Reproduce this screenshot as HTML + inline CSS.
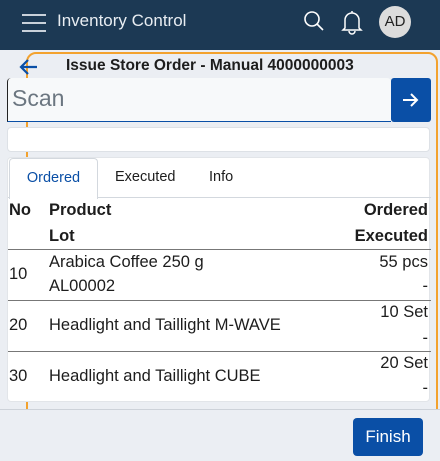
<!DOCTYPE html>
<html><head><style>
*{box-sizing:border-box;margin:0;padding:0}
body{width:440px;height:461px;background:#ebeef3;font-family:"Liberation Sans",sans-serif;position:relative;overflow:hidden;color:#1d1d1d}
.hdr{position:absolute;left:0;top:0;width:440px;height:50px;background:#1c3954;color:#fff}
.abs{position:absolute}
.orange{position:absolute;border:2px solid #f3a22e;border-radius:10px}
.c .abs{font-size:16.5px}
</style></head><body>
<div class="hdr">
 <div class="abs" style="left:22px;top:14px;width:24px;height:2px;background:#c9d1da"></div>
 <div class="abs" style="left:22px;top:22px;width:24px;height:2px;background:#c9d1da"></div>
 <div class="abs" style="left:22px;top:30px;width:24px;height:2px;background:#c9d1da"></div>
 <div class="abs" style="left:57px;top:11px;font-size:17px;color:#e8edf2">Inventory Control</div>
 <svg class="abs" style="left:303px;top:10px" width="22" height="22" viewBox="0 0 22 22"><circle cx="9" cy="9" r="7" fill="none" stroke="#fff" stroke-width="1.6"/><path d="M14 14l6 6" stroke="#fff" stroke-width="1.6"/></svg>
 <svg class="abs" style="left:341px;top:9px" width="22" height="26" viewBox="0 0 22 26"><path d="M4 19V11a7 7 0 0 1 14 0v8l2 2H2z M11 2v2 M8 22a3 3 0 0 0 6 0" fill="none" stroke="#fff" stroke-width="1.5"/></svg>
 <div class="abs" style="left:379px;top:6px;width:32px;height:32px;border-radius:50%;background:#dcdcdc;color:#222;font-size:15px;text-align:center;line-height:32px">AD</div>
</div>
<div class="orange" style="left:26px;top:52px;width:412px;height:400px"></div>
<svg class="abs" style="left:19px;top:58px" width="20" height="18" viewBox="0 0 20 18"><path d="M18 9H3 M9 2L2 9l7 7" fill="none" stroke="#0a4fa6" stroke-width="2.2"/></svg>
<div class="abs" style="left:64px;top:57px;font-size:15.5px;font-weight:bold;background:#ebeef3;padding:0 2px">Issue Store Order - Manual 4000000003</div>
<div class="abs" style="left:7px;top:78px;width:384px;height:44px;background:#f7f9fa;border-bottom:1.5px solid #0a4fa6;border-radius:4px 4px 0 0;font-size:23px;color:#6b7680;padding:7px 0 0 4px;border-left:1px solid #222">Scan</div>
<div class="abs" style="left:391px;top:78px;width:40px;height:44px;background:#0a4fa6;border-radius:3px"><svg style="position:absolute;left:11px;top:14px" width="18" height="16" viewBox="0 0 18 16"><path d="M1 8h14 M9 2l6 6-6 6" fill="none" stroke="#fff" stroke-width="2"/></svg></div>
<div class="abs" style="left:7px;top:127px;width:423px;height:25px;background:#fff;border:1px solid #dde1e6;border-radius:4px"></div>
<div class="abs c" style="left:7px;top:157px;width:423px;height:245px;background:#fff;border-radius:4px;border:1px solid #e2e5e9">
 <div class="abs" style="left:0;top:0;width:423px;height:40px;border-bottom:1px solid #d3d8de"></div>
 <div class="abs" style="left:1px;top:0;width:89px;height:41px;background:#fff;border:1px solid #d3d8de;border-bottom:none;border-radius:4px 4px 0 0;color:#0a4fa6;font-size:14.5px!important;text-align:center;line-height:39px">Ordered</div>
 <div class="abs" style="left:107px;top:11px;font-size:14.5px!important">Executed</div>
 <div class="abs" style="left:201px;top:11px;font-size:14.5px!important">Info</div>
 <div class="abs" style="left:1px;top:43px;font-weight:bold">No</div>
 <div class="abs" style="left:41px;top:43px;font-weight:bold">Product</div>
 <div class="abs" style="right:1px;top:43px;font-weight:bold">Ordered</div>
 <div class="abs" style="left:41px;top:69px;font-weight:bold">Lot</div>
 <div class="abs" style="right:1px;top:69px;font-weight:bold">Executed</div>
 <div class="abs" style="left:0;top:91px;width:423px;height:1px;background:#777"></div>
 <div class="abs" style="left:1px;top:107px">10</div>
 <div class="abs" style="left:41px;top:95px">Arabica Coffee 250 g</div>
 <div class="abs" style="left:41px;top:119px">AL00002</div>
 <div class="abs" style="right:1px;top:95px">55 pcs</div>
 <div class="abs" style="right:1px;top:119px">-</div>
 <div class="abs" style="left:0;top:142px;width:423px;height:1px;background:#777"></div>
 <div class="abs" style="left:1px;top:158px">20</div>
 <div class="abs" style="left:41px;top:158px">Headlight and Taillight M-WAVE</div>
 <div class="abs" style="right:1px;top:145px">10 Set</div>
 <div class="abs" style="right:1px;top:171px">-</div>
 <div class="abs" style="left:0;top:193px;width:423px;height:1px;background:#777"></div>
 <div class="abs" style="left:1px;top:209px">30</div>
 <div class="abs" style="left:41px;top:209px">Headlight and Taillight CUBE</div>
 <div class="abs" style="right:1px;top:196px">20 Set</div>
 <div class="abs" style="right:1px;top:221px">-</div>
</div>
<div class="abs" style="left:0;top:409px;width:440px;height:52px;background:#ebeef3;border-top:1px solid #cdd2d9"></div>
<div class="abs" style="left:353px;top:418px;width:70px;height:38px;background:#0a4fa6;border-radius:4px;color:#fff;font-size:17px;text-align:center;line-height:38px">Finish</div>
</body></html>
